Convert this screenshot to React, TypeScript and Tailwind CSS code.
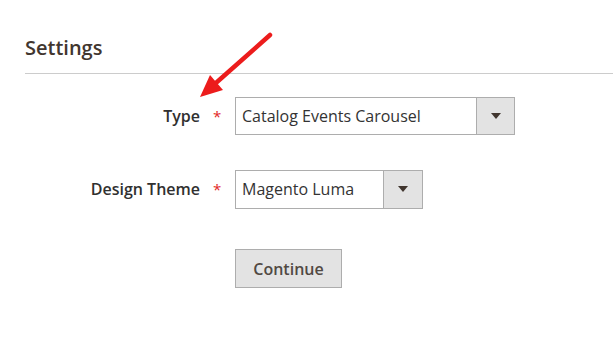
export default function App() {
  const font = { fontFamily: '"Open Sans", "Liberation Sans", sans-serif' };

  return (
    <div className="relative w-[613px] h-[344px] bg-white text-[#303030] overflow-hidden" style={font}>
      {/* Fieldset title */}
      <div className="ml-[25px] pt-[34px] pb-[11px] border-b border-[#cccccc]">
        <div className="text-[20px] leading-[28px] font-semibold text-[#41362f]">Settings</div>
      </div>

      {/* Fields */}
      <div className="pt-[23px] flex flex-col">
        <div className="flex items-center h-[38px]">
          <label className="w-[200px] text-right text-[16px] font-semibold text-[#303030]">Type</label>
          <span className="w-[35px] pl-[13px] text-[15px] text-[#e22626]">*</span>
          <div className="flex h-[38px] w-[280px] border border-[#adadad] bg-white">
            <div className="flex-1 flex items-center pl-[6px] text-[16px] text-[#333333]">Catalog Events Carousel</div>
            <div className="w-[38px] flex items-center justify-center bg-[#e3e3e3] border-l border-[#adadad]">
              <div className="w-0 h-0 border-l-[5px] border-r-[5px] border-t-[6px] border-l-transparent border-r-transparent border-t-[#41362f]" />
            </div>
          </div>
        </div>

        <div className="flex items-center h-[38px] mt-[35px]">
          <label className="w-[200px] text-right text-[16px] font-semibold text-[#303030]">Design Theme</label>
          <span className="w-[35px] pl-[13px] text-[15px] text-[#e22626]">*</span>
          <div className="flex h-[39px] w-[188px] border border-[#adadad] bg-white">
            <div className="flex-1 flex items-center pl-[6px] text-[16px] text-[#333333]">Magento Luma</div>
            <div className="w-[39px] flex items-center justify-center bg-[#e3e3e3] border-l border-[#adadad]">
              <div className="w-0 h-0 border-l-[5px] border-r-[5px] border-t-[6px] border-l-transparent border-r-transparent border-t-[#41362f]" />
            </div>
          </div>
        </div>

        <div className="flex mt-[41px] pl-[235px]">
          <button className="h-[39px] w-[107px] bg-[#e3e3e3] border border-[#adadad] text-[16px] font-semibold text-[#514943]">
            Continue
          </button>
        </div>
      </div>

      {/* Annotation arrow */}
      <svg className="absolute left-0 top-0 pointer-events-none" width="613" height="344">
        <line x1="270" y1="35" x2="217" y2="82" stroke="#ec1c1c" strokeWidth="4.5" strokeLinecap="round" />
        <polygon points="200,97 223,90 210,75" fill="#ec1c1c" />
      </svg>
    </div>
  );
}
